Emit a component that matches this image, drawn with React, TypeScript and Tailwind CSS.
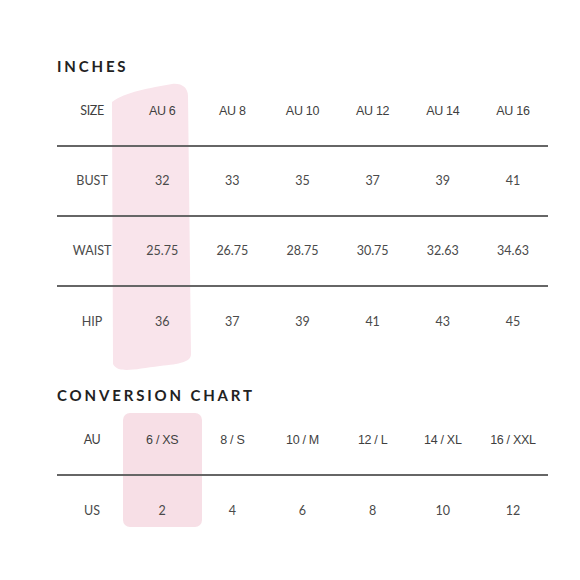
const sizes = ["AU 6", "AU 8", "AU 10", "AU 12", "AU 14", "AU 16"];

const inchRows = [
  { label: "BUST", values: ["32", "33", "35", "37", "39", "41"] },
  { label: "WAIST", values: ["25.75", "26.75", "28.75", "30.75", "32.63", "34.63"] },
  { label: "HIP", values: ["36", "37", "39", "41", "43", "45"] },
];

const conversion = ["6 / XS", "8 / S", "10 / M", "12 / L", "14 / XL", "16 / XXL"];
const usSizes = ["2", "4", "6", "8", "10", "12"];

const headFont = { fontFamily: '"Liberation Sans", Arial, sans-serif' };
const bodyFont = { fontFamily: 'Lato, "Open Sans", sans-serif' };

function Row({
  label,
  values,
  head,
  line,
}: {
  label: string;
  values: string[];
  head?: boolean;
  line?: boolean;
}) {
  return (
    <div
      className={`grid grid-cols-7 h-[70px] items-center text-center text-[12.5px] ${
        head ? "text-[#3f3f3f] tracking-[-0.3px]" : "text-[#4a4a4a]"
      } ${line ? "border-b-2 border-[#666]" : ""}`}
      style={head ? headFont : bodyFont}
    >
      <span style={bodyFont}>{label}</span>
      {values.map((v) => (
        <span key={v}>{v}</span>
      ))}
    </div>
  );
}

function Title({ children }: { children: string }) {
  return (
    <h2
      className="h-[18px] leading-[18px] text-[15px] font-bold tracking-[2.85px] text-[#222]"
      style={{ fontFamily: 'Lato, "Open Sans", sans-serif' }}
    >
      {children}
    </h2>
  );
}

export default function App() {
  return (
    <div className="relative w-[580px] h-[580px] bg-white overflow-hidden">
      {/* pink highlight strokes */}
      <svg className="absolute inset-0 z-0" width="580" height="580">
        <path
          d="M112 102 C 125 92, 150 88, 172 84 C 182 83, 188 88, 188 96 L 191 354 C 191 362, 180 364, 160 366 C 135 369, 118 374, 113 364 Z"
          fill="#f9e4eb"
        />
        <rect x="123" y="413" width="79" height="114" rx="7" fill="#f7dfe6" />
      </svg>

      <div className="relative z-10 pl-[57px] pr-[32px] pt-[57px]">
        <Title>INCHES</Title>
        <div className="h-[2px]" />
        <Row label="SIZE" values={sizes} head line />
        {inchRows.map((r, i) => (
          <Row key={r.label} label={r.label} values={r.values} line={i < inchRows.length - 1} />
        ))}

        <div className="h-[29px]" />
        <Title>CONVERSION CHART</Title>
        <div className="h-[2px]" />
        <Row label="AU" values={conversion} head line />
        <Row label="US" values={usSizes} />
      </div>
    </div>
  );
}
